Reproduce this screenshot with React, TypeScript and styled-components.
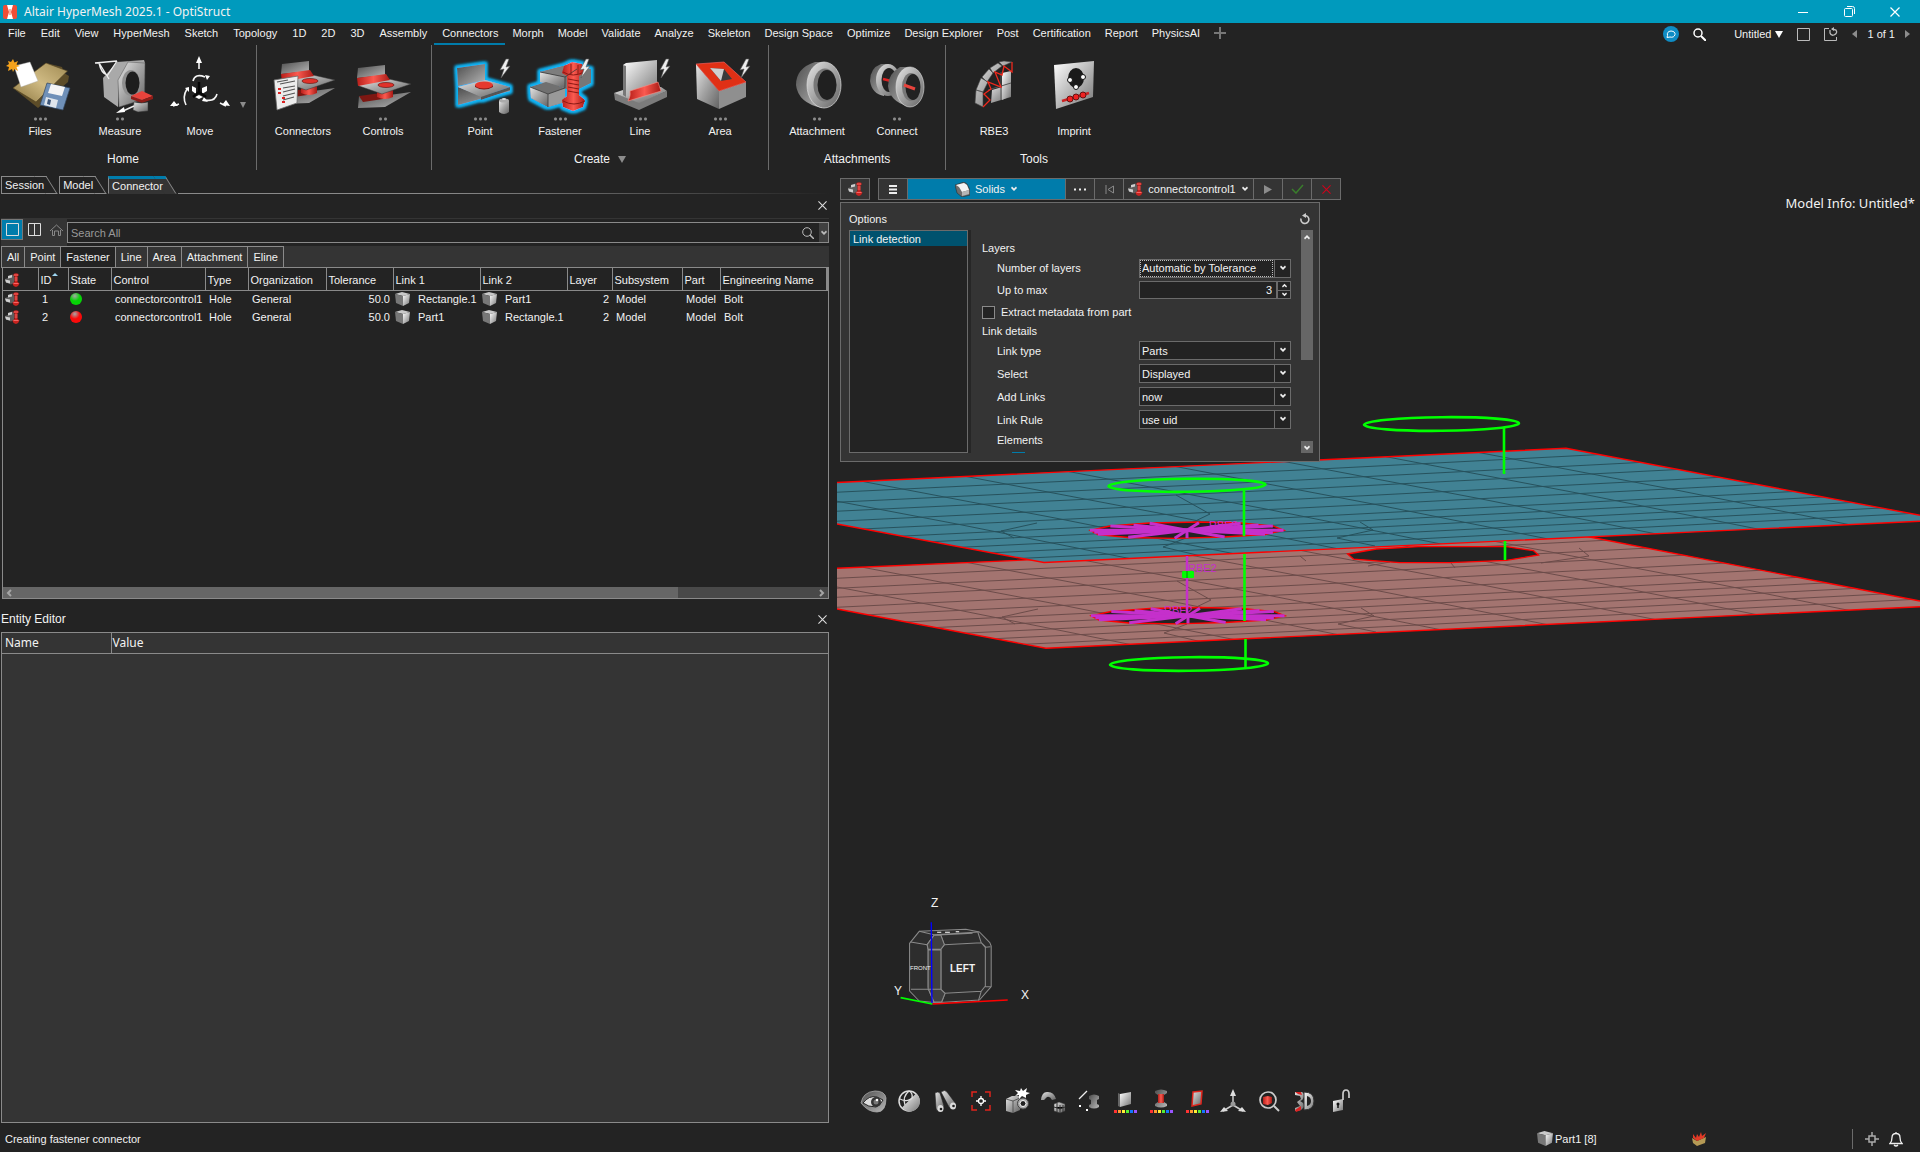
import React from "react";
import styled, { createGlobalStyle } from "styled-components";

const c = {
  bg: "#232323",
  panel: "#343434",
  line: "#8a8a8a",
  edge: "#6b6b6b",
  text: "#f2f2f2",
  accent: "#007cab",
  title: "#009abd",
};
const ui = `"Liberation Sans", Arial, sans-serif`;
const humanist = `"Noto Sans", "Open Sans", sans-serif`;

const Global = createGlobalStyle`
  *, *::before, *::after { box-sizing: border-box; }
  body { margin: 0; background: ${c.bg}; color: ${c.text}; font: 11px/14px ${ui}; }
  button, input, select { font: inherit; color: inherit; margin: 0; padding: 0; border: 0; background: none; border-radius: 0; }
  svg { display: block; flex: none; }
`;

const Page = styled.div`
  min-height: 100vh;
  display: flex;
  flex-direction: column;
`;
const Defs = styled.svg`
  position: absolute;
  width: 0;
  height: 0;
`;

/* ---------- title bar ---------- */
const TitleBar = styled.header`
  height: 23px;
  display: flex;
  align-items: center;
  gap: 7px;
  padding-left: 3px;
  background: ${c.title};
`;
const TitleText = styled.h1`
  flex: 1;
  margin: 0;
  font: 12px/20px ${humanist};
`;
const WindowButtons = styled.div`
  display: flex;
  padding-right: 2px;
`;
const WindowButton = styled.button`
  width: 46px;
  height: 22px;
  display: grid;
  place-items: center;
`;

/* ---------- menu bar ---------- */
const MenuBar = styled.nav`
  height: 22px;
  display: flex;
  align-items: stretch;
`;
const MenuItem = styled.button<{ $on?: boolean }>`
  padding: 0 7px;
  line-height: 20px;
  white-space: nowrap;
  border-bottom: 2px solid ${(p) => (p.$on ? c.accent : "transparent")};
  &:nth-child(-n + 11) { padding-left: 8px; }
`;
const MenuRight = styled.div`
  margin-left: auto;
  display: flex;
  align-items: center;
  gap: 14px;
  padding-right: 10px;
`;
const IconButton = styled.button`
  display: flex;
  align-items: center;
  gap: 4px;
`;
const Pager = styled.div`
  display: flex;
  align-items: center;
  gap: 10px;
`;

/* ---------- ribbon ---------- */
const Ribbon = styled.section`
  height: 125px;
  display: flex;
`;
const Group = styled.div<{ $pad: string }>`
  display: flex;
  flex-direction: column;
  padding: ${(p) => p.$pad};
  border-right: 1px solid ${c.edge};
  &:last-child { border-right: 0; }
`;
const Tools = styled.div`
  display: flex;
  height: 103px;
`;
const Tool = styled.button`
  width: 80px;
  display: flex;
  flex-direction: column;
  align-items: center;
  padding-top: 9px;
`;
const Dots = styled.span<{ $n: number }>`
  width: ${(p) => p.$n * 5}px;
  height: 10px;
  background: radial-gradient(circle at 50% 50%, #8c8c8c 1px, transparent 2px) 0 0 / 5px 10px;
`;
const GroupLabel = styled.div`
  height: 22px;
  display: flex;
  align-items: center;
  justify-content: center;
  gap: 8px;
  font-size: 12px;
`;
const Caret = styled.span<{ $c?: string; $s?: number }>`
  width: 0;
  height: 0;
  border: ${(p) => p.$s ?? 4}px solid transparent;
  border-top: ${(p) => (p.$s ?? 4) + 3}px solid ${(p) => p.$c ?? "#8c8c8c"};
  border-bottom: 0;
`;
const MoreCaret = styled.button`
  align-self: flex-end;
  width: 6px;
  padding-bottom: 27px;
`;

/* ---------- body ---------- */
const Body = styled.main`
  flex: 1;
  display: grid;
  grid-template-columns: minmax(0, 830fr) minmax(0, 1083fr);
  gap: 7px;
`;
const Left = styled.div`
  display: flex;
  flex-direction: column;
  padding: 6px 1px 3px 1px;
`;
const Tabs = styled.div`
  display: flex;
  height: 18px;
`;
const Tab = styled.button<{ $on?: boolean }>`
  position: relative;
  padding: 0 2px 0 3px;
  margin-right: 13px;
  border-left: 1px solid ${c.line};
  border-top: ${(p) => (p.$on ? `3px solid ${c.accent}` : `1px solid ${c.line}`)};
  border-bottom: 1px solid ${(p) => (p.$on ? c.panel : c.line)};
  background: ${(p) => (p.$on ? c.panel : c.bg)};
  line-height: ${(p) => (p.$on ? 13 : 16)}px;
  &::after {
    content: "";
    position: absolute;
    top: ${(p) => (p.$on ? -3 : -1)}px;
    bottom: -1px;
    right: -6px;
    width: 12px;
    transform: skewX(32deg);
    border-right: 1px solid ${c.line};
    border-top: ${(p) => (p.$on ? `3px solid ${c.accent}` : `1px solid ${c.line}`)};
    border-bottom: 1px solid ${(p) => (p.$on ? c.panel : c.line)};
    background: ${(p) => (p.$on ? c.panel : c.bg)};
    z-index: 0;
  }
  span { position: relative; z-index: 1; }
`;
const TabRule = styled.div`
  flex: 1;
  border-bottom: 1px solid;
  border-image: linear-gradient(90deg, ${c.line}, ${c.line} 40%, ${c.bg}) 1;
`;
const PanelHead = styled.div<{ $h: number; $pad?: string }>`
  height: ${(p) => p.$h}px;
  display: flex;
  align-items: center;
  justify-content: space-between;
  padding: ${(p) => p.$pad ?? "0 2px"};
`;
const PanelTitle = styled.h2`
  margin: 0;
  font: 12px/16px ${ui};
`;
const SearchRow = styled.div`
  height: 28px;
  display: flex;
  align-items: center;
  border-top: 1px solid ${c.panel};
  background: ${c.panel};
`;
const ViewButton = styled.button<{ $on?: boolean }>`
  width: 22px;
  height: 21px;
  display: grid;
  place-items: center;
  margin-bottom: 6px;
  border: 1px solid ${(p) => (p.$on ? "#777" : "transparent")};
  background: ${(p) => (p.$on ? c.accent : "none")};
`;
const SearchBox = styled.label`
  flex: 1;
  height: 100%;
  padding-top: 3px;
  background: ${c.bg};
  > div { display: flex; align-items: center; height: 21px; border: 1px solid ${c.line}; }
  input { flex: 1; min-width: 0; padding-left: 3px; outline: 0; }
  input::placeholder { color: #999; opacity: 1; }
`;
const SearchMore = styled.button`
  height: 19px;
  width: 9px;
  margin-left: 5px;
  display: grid;
  place-items: center;
  background: #404040;
`;
const Filters = styled.div`
  height: 22px;
  display: flex;
  background: ${c.panel};
  border-bottom: 1px solid ${c.line};
`;
const Filter = styled.button<{ $on?: boolean }>`
  padding: 0 5px;
  border: 1px solid ${c.line};
  border-bottom: 0;
  margin-right: -1px;
  background: ${(p) => (p.$on ? c.bg : c.panel)};
  line-height: 20px;
`;
const TableFrame = styled.div`
  height: 331px;
  margin: 0 0 0 1px;
  display: flex;
  flex-direction: column;
  border: 1px solid ${c.line};
  border-top: 0;
  overflow: hidden;
`;
const Table = styled.table`
  table-layout: fixed;
  width: 100%;
  border-collapse: collapse;
  th { height: 22px; padding: 2px 0 0 2px; text-align: left; font-weight: 400; white-space: nowrap; border-right: 1px solid ${c.line}; border-bottom: 1px solid ${c.line}; }
  td { height: 18px; padding: 0 3px 0 4px; white-space: nowrap; }
`;
const Num = styled.td`
  text-align: right;
`;
const SortMark = styled.span`
  display: inline-block;
  vertical-align: top;
  border: 3px solid transparent;
  border-bottom-color: #9fd6f0;
  border-top: 0;
`;
const LinkCell = styled.span`
  display: flex;
  align-items: center;
  gap: 8px;
  margin-left: -2px;
`;
const Dot = styled.span<{ $c: string }>`
  display: block;
  width: 12px;
  height: 12px;
  border-radius: 50%;
  background: radial-gradient(circle at 40% 25%, #fff9 0, ${(p) => p.$c} 5px);
`;
const HScroll = styled.div`
  margin-top: auto;
  height: 11px;
  display: flex;
  align-items: center;
  justify-content: space-between;
  padding: 0 3px;
  background: linear-gradient(90deg, #666 0 675px, #494949 675px);
`;
const Editor = styled.div`
  flex: 1;
  border: 1px solid ${c.line};
  background: ${c.panel};
`;
const EditorTable = styled.table`
  width: 100%;
  table-layout: fixed;
  border-collapse: collapse;
  font: 12px/16px ${humanist};
  th { height: 20px; padding: 0 0 0 3px; text-align: left; font-weight: 400; border-right: 1px solid ${c.line}; border-bottom: 1px solid ${c.line}; }
  th:last-child { border-right: 0; padding-left: 1px; }
`;

/* ---------- viewport ---------- */
const Viewport = styled.div`
  position: relative;
  display: flex;
  flex-direction: column;
  align-items: flex-start;
  padding: 8px 0 11px 3px;
`;
const Scene = styled.svg`
  position: absolute;
  left: 0;
  top: 0;
  width: 100%;
  height: 100%;
`;
const ModelInfo = styled.div`
  position: absolute;
  right: 5px;
  top: 24px;
  font: 13px/18px ${humanist};
`;
const Guide = styled.div`
  position: relative;
  display: flex;
  margin-bottom: 2px;
`;
const GuideButton = styled.button<{ $w?: number; $gap?: boolean }>`
  width: ${(p) => p.$w ?? 30}px;
  height: 22px;
  margin-right: ${(p) => (p.$gap ? 8 : -1)}px;
  display: flex;
  align-items: center;
  justify-content: center;
  gap: 5px;
  border: 1px solid ${c.edge};
  background: ${c.panel};
`;
const SolidsButton = styled(GuideButton)`
  background: ${c.accent};
`;
const Panel = styled.div`
  position: relative;
  width: 480px;
  height: 260px;
  padding: 7px 6px 8px 8px;
  display: flex;
  flex-direction: column;
  border: 1px solid ${c.edge};
  background: ${c.panel};
`;
const PanelTop = styled.div`
  height: 20px;
  display: flex;
  justify-content: space-between;
  align-items: center;
  padding: 0 2px 2px 0;
`;
const PanelBody = styled.div`
  flex: 1;
  min-height: 0;
  display: flex;
`;
const OptionList = styled.div`
  width: 122px;
  padding-right: 3px;
  background: #262626;
  > div { height: 100%; border: 1px solid ${c.edge}; background: ${c.bg}; }
`;
const Option = styled.button`
  display: block;
  width: 100%;
  height: 15px;
  padding-left: 3px;
  text-align: left;
  background: #00526e;
`;
const Form = styled.div`
  flex: 1;
  overflow: hidden;
  padding: 9px 10px 0 11px;
`;
const Heading = styled.div<{ $h?: number; $in?: boolean }>`
  height: ${(p) => p.$h ?? 18}px;
  display: flex;
  align-items: center;
  padding-left: ${(p) => (p.$in ? 15 : 0)}px;
`;
const Field = styled.div<{ $h?: number }>`
  height: ${(p) => p.$h ?? 23}px;
  display: flex;
  align-items: center;
  padding-left: 15px;
  > label { flex: 1; }
`;
const SelectBox = styled.span<{ $focus?: boolean }>`
  position: relative;
  width: 152px;
  height: 19px;
  display: flex;
  select {
    appearance: none;
    width: 100%;
    height: 19px;
    padding: 0 18px 0 2px;
    border: 1px solid ${c.edge};
    background: linear-gradient(90deg, transparent 134px, ${c.edge} 134px 135px, transparent 135px), ${c.bg};
    outline: 0;
  }
  &::before {
    content: "";
    position: absolute;
    inset: 1px 18px 1px 1px;
    border: 1px dotted ${(p) => (p.$focus ? "#bbb" : "transparent")};
    pointer-events: none;
  }
  svg { position: absolute; right: 4px; top: 6px; pointer-events: none; }
`;
const Spin = styled.span`
  width: 152px;
  height: 18px;
  display: flex;
  input { flex: 1; min-width: 0; text-align: right; padding-right: 4px; border: 1px solid ${c.edge}; background: ${c.bg}; outline: 0; }
`;
const Steppers = styled.span`
  width: 14px;
  display: flex;
  flex-direction: column;
  button { flex: 1; display: grid; place-items: center; border: 1px solid ${c.edge}; background: ${c.bg}; min-height: 0; }
  button + button { border-top: 0; }
`;
const Check = styled.input`
  appearance: none;
  width: 13px;
  height: 13px;
  margin: 0 6px 0 0;
  border: 1px solid ${c.line};
  background: ${c.bg};
  &:checked { background: ${c.accent}; border-color: ${c.accent}; }
`;
const CheckRow = styled.div<{ $in?: boolean }>`
  height: 22px;
  display: flex;
  align-items: ${(p) => (p.$in ? "flex-start" : "center")};
  padding: ${(p) => (p.$in ? "3px 0 0 30px" : "0")};
`;
const VScroll = styled.div`
  width: 12px;
  display: flex;
  flex-direction: column;
  justify-content: space-between;
  span { display: flex; justify-content: center; background: #666; }
  span:first-child { height: 130px; padding-top: 4px; }
  span:last-child { height: 12px; padding-top: 4px; }
`;
const ViewTools = styled.div`
  position: relative;
  margin-top: auto;
  display: flex;
  gap: 8px;
  padding-left: 19px;
`;
const ViewTool = styled.button`
  width: 28px;
  height: 28px;
`;

/* ---------- status bar ---------- */
const Status = styled.footer`
  height: 26px;
  display: flex;
  align-items: center;
  padding: 0 17px 0 5px;
`;
const StatusLeft = styled.span`
  flex: 1;
`;
const StatusItem = styled.button<{ $w: number }>`
  width: ${(p) => p.$w}px;
  display: flex;
  align-items: center;
  gap: 2px;
`;
const StatusEnd = styled.div`
  display: flex;
  align-items: center;
  gap: 10px;
  height: 20px;
  padding-left: 12px;
  border-left: 1px solid ${c.edge};
`;

/* ---------- drawings ---------- */
const M = "url(#metal)";
const MD = "url(#metalDark)";
const ML = "url(#metalLight)";
const R = "url(#red)";
const Svg = ({ s = 60, children }: { s?: number; children: React.ReactNode }) => (
  <svg width={s} height={s} viewBox={`0 0 ${s} ${s}`} overflow="visible" aria-hidden="true">{children}</svg>
);
const Lightning = () => <path d="M56 5 50 16l4-1-3 9 9-12-4 1 3-8z" fill="#eee" stroke="#555" strokeWidth=".6" />;
const Chevron = ({ up, w = 8, fill = "#eee" }: { up?: boolean; w?: number; fill?: string }) => (
  <svg width={w} height={w === 8 ? 6 : 5} viewBox="0 0 8 6" aria-hidden="true">
    <path d={up ? "M1 4 4 1l3 3-1 1.500-2-2-2 2z" : "M1 2l1-1.500 2 2 2-2L7 2 4 5z"} fill={fill} />
  </svg>
);
const Tri = ({ left }: { left?: boolean }) => (
  <svg width="5" height="8" viewBox="0 0 5 8" aria-hidden="true"><path d={left ? "M5 0v8L0 4z" : "M0 0v8l5-4z"} fill="#8c8c8c" /></svg>
);
const ScrollMark = ({ right }: { right?: boolean }) => (
  <svg width="6" height="8" viewBox="0 0 6 8" aria-hidden="true"><path d={right ? "M1 1l3 3-3 3" : "M5 1 2 4l3 3"} fill="none" stroke="#a5a5a5" strokeWidth="2" /></svg>
);
const Cross = ({ s = 9, color = "#ddd" }: { s?: number; color?: string }) => (
  <svg width={s} height={s} viewBox="0 0 10 10" aria-hidden="true"><path d="M.5.5l9 9M9.5.5l-9 9" stroke={color} strokeWidth="1.200" /></svg>
);
const PartCube = ({ s = 15 }: { s?: number }) => (
  <svg width={s} height={s} viewBox="0 0 15 15" aria-hidden="true">
    <path d="M0 2 7 0l8 2-7 2z" fill="#c9c9c9" /><path d="M0 2l8 2v10l-7-3z" fill="#777" /><path d="M8 4l7-2-1 9-6 3z" fill={ML} />
  </svg>
);
const SolidCube = () => (
  <svg width="15" height="15" viewBox="0 0 15 15" aria-hidden="true">
    <path d="M0 3 9 0l3 2 3 6v5l-8 2-5-4z" fill="#6d6d6d" stroke="#222" strokeWidth=".5" /><path d="M1 3 9 1l3 2 2 5-7 2-3-5z" fill="#f4f4f4" /><path d="M7 10l7-2v4l-7 2z" fill="#b5b5b5" />
  </svg>
);
const FastenerMini = () => (
  <svg width="15" height="14" viewBox="0 0 15 14" aria-hidden="true">
    <path d="M0 6l3-1V3l4-1.500 2 .5v8l-3 1.500-5-2z" fill="#5e5e5e" /><path d="M3 3l4-1v2.500L3 5.500zM0 6.500l5 1v3l-4-1z" fill="#cfcfcf" />
    <path d="M8.500 1q2.500-1.600 5 0v2h-1v6l2 1.500q-1 3-3.500 3.500-3-.5-3.500-3.500L9.500 9V3h-1z" fill="#c8231f" /><path d="M9 2h4M9.500 5h3M9.500 7h3M8.500 10.500h5" stroke="#f77" strokeWidth=".8" />
  </svg>
);
const Reload = () => (
  <svg width="12" height="12" viewBox="0 0 12 12" aria-hidden="true"><path d="M2 5.500a4 4 0 1 0 4.500-3" fill="none" stroke="#ccc" strokeWidth="1.600" /><path d="M3 2.500 7 0v5z" fill="#ccc" /></svg>
);

const Flanges = () => (
  <>
    <path d="M9 50l1-12 16 1 36-5-26 15z" fill={MD} />
    <path d="M10 38l22-3 2 6-20 3z" fill="#7d1712" />
    <path d="M28 32h16v7q-8 4-16 0z" fill={R} />
    <path d="M9 25l31-4 22 5-29 10-23-8z" fill={M} stroke="#333" strokeWidth=".5" />
    <path d="M9 10l27-3v10L8 20z" fill={MD} />
    <path d="M8 20l29-4 4 6-32 6z" fill={R} />
    <ellipse cx="37" cy="27" rx="8" ry="2.500" fill="#e0322b" stroke="#5a0c08" strokeWidth=".6" />
  </>
);

const ribbonIcons: Record<string, React.ReactNode> = {
  Files: (
    <Svg>
      <path d="M3 34 36 9l16 4 2 6 5 3-1 6-30 26z" fill="#5c4c28" />
      <path d="M36 9l21.500 8L26 48 3 34z" fill="url(#gold)" stroke="#4d4020" strokeWidth=".6" />
      <path d="M4 12l16-4 8 19-17 6z" fill="#fff" stroke="#aaa" strokeWidth=".4" />
      <path d="M37 29l23 5-7 22-23-5z" fill="#6f90b8" stroke="#32465f" strokeWidth=".7" />
      <path d="M41 30l14 3-3 9-14-3z" fill="#f4f4f4" /><path d="M36 43l12 3-2 8-12-3z" fill="#dfe5ec" /><path d="M38 45l3 1-1 5-3-1z" fill="#3d577b" />
      <path d="M3 5l1.500 3.500L8 7 6.500 10.500 10 12l-3.500 1L8 17l-3.500-2L3 18l-1-3-4 2 1-4-3-1 3-2-1-3 3 1z" fill="#f5a21b" />
    </Svg>
  ),
  Measure: (
    <Svg>
      <path d="M13 24 27 8l27-2 1 3-16 1-10 17-1 26-14-10z" fill="#a9a9a9" />
      <path d="M28 26 38 8l17 1-.5 36L29 53z" fill={M} stroke="#555" strokeWidth=".5" />
      <ellipse cx="41" cy="29" rx="9" ry="13" fill="#8f8f8f" /><ellipse cx="42.500" cy="29" rx="7" ry="11.500" fill="#1d1d1d" />
      <path d="M27 7 5 9h4l10 16M27 7 17 22M9 9q2 10 8 12" fill="none" stroke="#eee" strokeWidth="1.300" />
      <path d="M41 42l11-5 11 5-11 4z" fill="#e8433c" /><path d="M41 42l11 4 11-4v3l-11 4-11-4z" fill="#8e1d18" />
      <path d="M44 48q8 2 14 0v9l-10 1-5-2z" fill={M} stroke="#333" strokeWidth=".5" />
      <path d="M44 52l-11 5" stroke="#eee" strokeWidth="1.500" /><path d="M26 59l8-6 1 5z" fill="#fff" />
    </Svg>
  ),
  Move: (
    <Svg>
      <g fill="none" stroke="#f4f4f4" strokeWidth="1.600">
        <path d="M29 15V7M9 50l-6 2M50 49l6 3M23 27q2-8 12-4M17 35q-5 8-1 16M47 40q-2 8-12 6" />
      </g>
      <path d="M29 2l3 7h-6zM0 52l4-5 4 5zM60 52l-8-1 4-5zM37 26l-2-5 5 1zM19 33l-4 1 4 4zM34 43l-2 4 6 1z" fill="#fff" />
      <path d="M22 32l4 2v6l-4-3zM32 34l5-2v5l-5 3zM25 43l4-2 4 2-4 2z" fill="#fff" /><path d="M29 28v10l-6 5M29 38l7 5" stroke="#050505" strokeWidth="2.500" fill="none" />
    </Svg>
  ),
  Connectors: (
    <Svg>
      <Flanges />
      <path d="M1 26l24-4-1 27-20 7z" fill="#ececec" stroke="#666" strokeWidth=".8" />
      <path d="M4 28l11-2M10 34l12-2M10 38l12-3M10 42l12-3M10 46l11-3M7 30l15-3" stroke="#555" strokeWidth="1.200" /><path d="M5 35h3M5 39h3M9 44h3M9 48h3" stroke="#d22" strokeWidth="2" />
    </Svg>
  ),
  Controls: <Svg><g transform="translate(-4 4)"><Flanges /></g></Svg>,
  Point: (
    <Svg>
      <g filter="url(#glow)">
        <path d="M8 33l23 9 29-8v3L8 51z" fill={MD} /><path d="M8 33l27-7 25 7-29 10z" fill={M} /><path d="M31 43l29-10v3L31 46z" fill="#555" />
        <path d="M7 14l28-4v16L8 32z" fill={MD} />
      </g>
      <path d="M25 31v2q9 5 18 0v-2z" fill="#7d1712" /><ellipse cx="34" cy="31" rx="9" ry="3.500" fill="#e5392f" />
      <Lightning />
      <path d="M49 47v11q5 4 10 0V47z" fill={M} /><ellipse cx="54" cy="46.500" rx="5" ry="2" fill="#aaa" /><ellipse cx="54" cy="45" rx="2" ry="1" fill="#ddd" />
    </Svg>
  ),
  Fastener: (
    <Svg>
      <g filter="url(#glow)">
        <path d="M10 18 37 11l24 4v14l-12 6-14 0z" fill="#777" /><path d="M10 18l25 5v11l-25-6z" fill={M} /><path d="M10 18l27-7 10 4-12 8z" fill="#7d7d7d" />
        <path d="M0 33l16-5 19 6v14l-17 5L1 44z" fill="#6f6f6f" /><path d="M0 33l18 7v13L1 44z" fill={M} /><path d="M18 40l17-6v14l-17 5z" fill="#999" />
        <path d="M34 12l8-4 10 2 2 9-5 3v19l6 5-2 7-10 4-10-4-1-7 5-4V22l-5-3z" fill={R} />
      </g>
      <path d="M10 18l25 5v11M35 23l12-8M0 33l18 7v13M18 40l17-6" stroke="#3a3a3a" strokeWidth=".8" fill="none" />
      <path d="M33 18q10 6 21 0M38 25l11 2M38 29l11 2M38 33l11 2M38 37l11 2M33 47q11 6 22 0M41 10v10M48 11v9" stroke="#8b1a15" fill="none" />
      <Lightning />
    </Svg>
  ),
  Line: (
    <Svg>
      <path d="M4 39l25 9 28-11v6L29 56 5 46z" fill="#7b7b7b" /><path d="M4 39l25 10 28-12-6-4-38 3z" fill={M} />
      <path d="M13 11l3-2 31-3v26L16 43l-3-2z" fill={ML} /><path d="M13 11l3 1v31l-3-2z" fill="#777" />
      <path d="M20 37l28-9 3 9-33 10q3-5 2-10z" fill={R} stroke="#ff8d84" strokeWidth=".6" /><Lightning />
    </Svg>
  ),
  Area: (
    <Svg>
      <path d="M6 10l23 27v18L7 45z" fill={M} /><path d="M56 28v15L29 55V37z" fill="#8f8f8f" /><path d="M6 10l28-2 22 20-27 9z" fill="#e03015" stroke="#f66" strokeWidth=".6" />
      <path d="M20 14l14 1 8 10-11 2z" fill="#3b3b3b" /><path d="M20 14l14 1-3 12z" fill="#cfcfcf" /><Lightning />
    </Svg>
  ),
  Attachment: (
    <Svg>
      <path d="M36 8H28Q9 14 9 31q2 18 26 23z" fill={MD} /><ellipse cx="37" cy="31" rx="17" ry="23" fill={M} stroke="#ddd" strokeWidth=".7" />
      <ellipse cx="38" cy="31" rx="11.500" ry="16.500" fill="#777" /><ellipse cx="40" cy="31" rx="9.500" ry="15" fill="#202020" />
    </Svg>
  ),
  Connect: (
    <Svg>
      <path d="M22 10h-8Q3 14 3 27q2 13 14 15z" fill={MD} /><ellipse cx="21" cy="26" rx="12" ry="16" fill={M} /><ellipse cx="22" cy="26" rx="7.500" ry="12" fill="#222" />
      <path d="M16 25l12 3" stroke="#d22" strokeWidth="2.500" />
      <path d="M42 13H33Q21 20 21 32q2 16 20 20z" fill={MD} /><ellipse cx="43" cy="33" rx="14" ry="20" fill={M} stroke="#ddd" strokeWidth=".6" /><ellipse cx="44" cy="33" rx="9" ry="14" fill="#777" /><ellipse cx="46" cy="33" rx="7.500" ry="13" fill="#222" />
      <path d="M37 31l11 4" stroke="#e8433c" strokeWidth="3" />
    </Svg>
  ),
  RBE3: (
    <Svg>
      <path d="M11 49l1-13 6-12 8-9 12-8 10 1v10q-14 5-22 20l-6 15z" fill="#222" />
      <path d="M28 36l10-3 9-4v14l-20 6z" fill={M} /><path d="M38 19l9-2v25l-9 4z" fill={ML} /><path d="M37 18v28M24 36l23-7" stroke="#555" />
      <path d="M11 49l1-13 7 2v15zM12 36l5-12 7 4-5 10zM18 23l7-8 4 4-6 9zM26 14l8-5 4 3-9 7zM35 8l5-1 8 1-9 4z" fill={M} stroke="#444" strokeWidth=".6" />
      <path d="M48 8v10l-8-6-2 9-7-3 6 15-13-5 3 7-7 5 6 6-7 7" fill="none" stroke="#f0281c" strokeWidth="1.300" />
    </Svg>
  ),
  Imprint: (
    <Svg>
      <path d="M10 11l40-4-1 36-37 12z" fill={ML} />
      <ellipse cx="32" cy="24" rx="8" ry="10" fill="#1a1a1a" /><g fill="#fff" stroke="#111"><circle cx="26" cy="26" r="2.500" /><circle cx="39" cy="23" r="2.500" /><circle cx="32" cy="33" r="2.500" /></g>
      <path d="M18 47l27-8" stroke="#c22" strokeWidth="2.500" /><g fill="#e22" stroke="#611"><circle cx="26" cy="45" r="3" /><circle cx="32" cy="43" r="3" /><circle cx="39" cy="41" r="3" /></g>
    </Svg>
  ),
};

const Rainbow = () => (
  <>{["#f33", "#f93", "#fe3", "#5e3", "#17f", "#95f"].map((f, i) => <rect key={f} x={3 + i * 4} y="23" width="3" height="3" fill={f} />)}</>
);
const viewIcons: [string, React.ReactNode][] = [
  ["Visibility", <><path d="M2 16Q4 5 16 4q10 0 11 7 0 14-9 14Q9 25 2 16z" fill={MD} stroke="#aaa" strokeWidth=".8" /><path d="M4 16q6-8 14-6l6 3q-3 6-7 7-8 0-13-4z" fill="#ddd" stroke="#222" /><circle cx="17" cy="15" r="5" fill="#333" /><circle cx="17" cy="15" r="2.500" fill="#777" /><circle cx="18" cy="13" r="1.300" fill="#fff" /></>],
  ["Globe", <><circle cx="14" cy="14" r="10" fill="#232323" stroke="#ddd" strokeWidth="1.500" /><path d="M21 6.500a10 10 0 1 1-14 14z" fill={ML} /><path d="M5 12q8 4 13-2M14 4q-7 6-4 14M14 4q4 2 3 7" fill="none" stroke="#ddd" strokeWidth="1.300" /></>],
  ["Find", <><path d="M4 6q3-2 5 0l4 13q-1 6-5 5-3 0-3-3z" fill={M} stroke="#222" strokeWidth=".6" /><path d="M10 5q4-3 6 0l9 12q1 4-3 5-3 0-4-2z" fill={M} stroke="#222" strokeWidth=".6" /><ellipse cx="9.500" cy="21.500" rx="3" ry="3.500" fill="#ddd" /><ellipse cx="22" cy="19" rx="3" ry="3.500" fill="#ddd" /><circle cx="10" cy="22" r="1.300" fill="#222" /><circle cx="22.500" cy="19" r="1.300" fill="#222" /></>],
  ["Fit", <><path d="M5 10V5h5M18 5h5v5M23 18v5h-5M10 23H5v-5" fill="none" stroke="#e0241c" strokeWidth="1.500" /><circle cx="14" cy="14" r="2.500" fill="none" stroke="#fff" strokeWidth="1.300" /><path d="M14 9v3M14 16v3M9 14h3M16 14h3" stroke="#fff" strokeWidth="1.300" /></>],
  ["Capture", <><path d="M3 12l6-3h8v14l-7 3-7-2z" fill={M} /><path d="M3 12l7 2v12M10 14l7-3" stroke="#444" fill="none" strokeWidth=".8" /><circle cx="20" cy="16.500" r="5.500" fill="#aaa" stroke="#444" /><circle cx="20" cy="16.500" r="3" fill="#222" stroke="#fff" /><path d="M18 1l2 3 4-3-1 4 4 1-4 2v3l-4-2-3 3v-4l-4 1 3-3-3-3 5 1z" fill="#fff" /></>],
  ["Shading", <><path d="M2 13Q3 4 9 5q6 0 8 7l-4 1q-2-4-5-3l-3 3z" fill={M} /><path d="M15 17l5-2 6 2v7l-5 2-6-2z" fill={M} stroke="#333" strokeWidth=".5" /><path d="M21 18v8M15 20l6 2 5-2M18 16v9M24 18v7" stroke="#333" /></>],
  ["Elements", <><path d="M4 12l8-8" stroke="#eee" strokeWidth="1.300" /><path d="M4 18h2v2H4zM11 22h2v2h-2z" fill="#fff" /><path d="M14 9q5-3 10 0v3l-2 1v4l2 1v2q-5 3-10 0v-2l2-1v-4l-2-1z" fill={MD} /></>],
  ["Color by component", <><path d="M9 7l11-2v12L9 20z" fill={ML} /><path d="M7 6l2 1v13l-2-1z" fill="#666" /><Rainbow /></>],
  ["Color by connector", <><path d="M8 4q6-3 12 0v2l-3 2v7l3 2v2q-6 3-12 0v-2l3-2V8L8 6z" fill={MD} /><path d="M11 7h6v9h-6z" fill={R} /><Rainbow /></>],
  ["Color by edge", <><path d="M10 5l9-1-1 13-9 2z" fill={M} stroke="#e0241c" strokeWidth="1.500" /><Rainbow /></>],
  ["Axes", <><path d="M14 6v12L4 24M14 18l10 6" stroke="#ccc" strokeWidth="1.500" fill="none" /><path d="M14 2l3 7h-6zM1 25l4-5 4 4zM27 25l-4-5-4 4z" fill="#ddd" /><circle cx="14" cy="17" r="2.500" fill="#999" /></>],
  ["Zoom entity", <><circle cx="13" cy="13" r="8" fill="#222" stroke="#ccc" strokeWidth="1.700" /><path d="M19 19l5 5" stroke="#ccc" strokeWidth="2" /><path d="M8 10l5-1 4 1v6l-4 2-5-1z" fill={R} /></>],
  ["Perspective", <><path d="M4 5h7q3 2 2 5-1 3-4 4 5 2 4 6-2 3-6 4H4v-3l5-2-3-4 4-3-1-3-5-1z" fill={M} /><path d="M4 5h6l1 3-4-1zM4 23l6-4v4l-5 2z" fill="#d22" /><path d="M13 5q10 0 10 9t-10 9z" fill={ML} stroke="#333" /><path d="M16 9q4 1 4 5t-4 5z" fill="#222" /></>],
  ["Unlock", <><path d="M6 14l10-2v11L6 25z" fill={ML} /><path d="M16 13V7q0-4 3-4t3 4v4" fill="none" stroke="#ccc" strokeWidth="1.700" /><circle cx="11" cy="17" r="1.500" fill="#111" /><path d="M11 17v4" stroke="#111" strokeWidth="1.500" /></>],
];

const backLines = [758, 862, 966, 1069, 1176, 1284, 1386, 1478];
const longLines = [470, 480, 489, 499, 508, 517, 524, 531, 538, 545];
const bluePoly = "837,482.500 1566,448.300 1920,515.300 1920,521.300 1044,562.500 837,524";
const pinkPoly = "837,568.300 1582,535.500 1920,601 1920,606.700 1046,648.300 837,609";
const spokes = [[728, 391], [785, 378], [850, 376], [895, 370], [1033, 368], [1150, 370], [1200, 375], [1240, 378], [1270, 391], [1240, 398], [1218, 403], [1105, 411], [965, 415], [835, 412], [750, 403], [740, 397]];

const MeshLines = ({ stroke }: { stroke: string }) => (
  <g fill="none" stroke={stroke} strokeWidth="1">
    {backLines.map((x) => {
      const y = 482.5 - (x - 837) * 0.047;
      return <path key={x} d={`M${x} ${y}l${200} ${38}l${300} ${60}`} />;
    })}
    {longLines.map((y) => <path key={y} d={`M800 ${y + 24}L1300 ${y}L1920 ${y - 32}`} />)}
    <path d="M1176 495l34 19-23 11M1037 523l-36 8 13 7M1186 538l-23 9 38 9M1360 522l13 8-36 8 38 8" />
  </g>
);
const Spider = () => (
  <g>
    <polygon points="1090,530.300 1110,526 1149,523 1200,522 1241,523 1273,526 1284,530.300 1265,534.500 1224,537 1175,538.300 1128,537.500 1098,534.500" fill="#232323" stroke="#f00" strokeWidth="1.300" />
    <g stroke="#c530cb" strokeWidth="3">
      {spokes.map(([x, y]) => <path key={`${x}-${y}`} d={`M1187 530.300L${830 + x / 2.8} ${400 + y / 3}`} />)}
      <path d="M1187 530v8" />
    </g>
  </g>
);

const ModelScene = () => (
  <Scene viewBox="837 170 1083 956" preserveAspectRatio="xMinYMin meet" role="img" aria-label="Model view">
    <clipPath id="blueClip"><polygon points={bluePoly} /></clipPath>
    <clipPath id="pinkClip"><polygon points={pinkPoly} /></clipPath>
    <polygon points={pinkPoly} fill="#a37470" />
    <g clipPath="url(#pinkClip)">
      <g transform="translate(1 86)"><MeshLines stroke="#6c4c4a" /></g>
      <path d="M1579 548l10 8-48 7M1300 556l6 5M1368 566l22-4M1451 563l4 5" fill="none" stroke="#6c4c4a" />
    </g>
    <path d="M1347.500 554l29-5 42-2.300h88l27 4 5 4.300-32 5.300-56 2.400h-51l-46-3.600z" fill="#232323" stroke="#f00" strokeWidth="1.300" />
    <path d="M837 568.300 1582 535.500 1920 601M1920 606.700 1046 648.300 837 609" fill="none" stroke="#f00" strokeWidth="1.400" />
    <polygon points={bluePoly} fill="#418294" />
    <g clipPath="url(#blueClip)"><MeshLines stroke="#27525d" /></g>
    <path d="M837 482.500 1566 448.300 1920 515.300M1920 521.300 1044 562.500 837 524" fill="none" stroke="#f00" strokeWidth="1.400" />
    <g fill="#c530cb" fontFamily="Liberation Sans, sans-serif" fontSize="11">
      <text x="1188" y="572">RBE2</text>
      <Spider />
      <g transform="translate(1 85.500)"><Spider /></g>
      <text x="1209" y="529">RBE2</text>
      <text x="1164" y="614">RBE2</text>
    </g>
    <path d="M1187 556v58" stroke="#c530cb" strokeWidth="2.500" />
    <rect x="1182" y="571" width="12" height="7" rx="1" fill="#0f0" /><path d="M1187 571v7" stroke="#0a8a0a" />
    <g fill="none" stroke="#0f0" strokeWidth="2.600">
      <ellipse cx="1187" cy="485.300" rx="78.500" ry="6.500" transform="rotate(-.6 1187 485)" />
      <ellipse cx="1189" cy="664" rx="79" ry="6.800" transform="rotate(-.6 1189 664)" />
      <ellipse cx="1441.500" cy="424" rx="77.500" ry="6.800" transform="rotate(-.6 1441 424)" />
      <path d="M1244 489v47M1244.500 554v67M1245.500 639v28M1504 428v46M1505 541v19" />
    </g>
    <g transform="translate(840 880) scale(.3444 .3333)" fill="#2d2d2d" stroke="#8a8a8a" strokeWidth="3" strokeLinejoin="round">
      <path d="M230 154l135-6 40 8 30 32 4 10v122l-34 40-125 8-50-5-28-30V190z" />
      <path d="M205 186l48 8 20-28 112-6M253 194l3 16v112l22 0M293 208h-37l-3-14 20-28 20 0 10 28zM293 208l0 120h-37l-50 0M302 194l108-6 12 12 0 118-12 16-106 6-11-12M273 368l-16-40 36 0 12 12-10 26M400 156l10 32 12 14 15-2M422 320l16 0M410 334l-8 28M230 154l43 10 130-8" fill="none" />
      <path d="M273 166h20l10 28-10 14h-37l-3-14zM256 210h37v118h-37zM257 328h36l12 12-10 26h-22z" fill="#404040" />
      <path d="M282 157h12M305 157h14M336 155h10" stroke="#fff" />
      <path d="M265 127l2 245" stroke="#00f" strokeWidth="4" /><path d="M268 372l219-12" stroke="#f00" strokeWidth="5" /><path d="M176 353l92 19" stroke="#0f0" strokeWidth="5" />
    </g>
    <g fill="#f2f2f2" fontFamily="Liberation Sans, sans-serif" fontSize="12">
      <text x="931" y="907">Z</text><text x="894" y="995">Y</text><text x="1021" y="999">X</text>
      <text x="950" y="972" fontSize="10" fontWeight="700">LEFT</text>
      <text x="910" y="970" fontSize="6">FRONT</text>
    </g>
  </Scene>
);

/* ---------- data ---------- */
const menus = ["File", "Edit", "View", "HyperMesh", "Sketch", "Topology", "1D", "2D", "3D", "Assembly", "Connectors", "Morph", "Model", "Validate", "Analyze", "Skeleton", "Design Space", "Optimize", "Design Explorer", "Post", "Certification", "Report", "PhysicsAI"];
const groups: { label: string; pad: string; caret?: boolean; more?: boolean; tools: [string, number][] }[] = [
  { label: "Home", pad: "0 10px 0 0", more: true, tools: [["Files", 3], ["Measure", 2], ["Move", 0]] },
  { label: "", pad: "0 8px 0 6px", tools: [["Connectors", 0], ["Controls", 2]] },
  { label: "Create", pad: "0 8px", caret: true, tools: [["Point", 3], ["Fastener", 3], ["Line", 3], ["Area", 3]] },
  { label: "Attachments", pad: "0 8px", tools: [["Attachment", 2], ["Connect", 2]] },
  { label: "Tools", pad: "0 8px", tools: [["RBE3", 0], ["Imprint", 0]] },
];
const columns: [string, number][] = [["", 35], ["ID", 30], ["State", 43], ["Control", 94], ["Type", 43], ["Organization", 78], ["Tolerance", 67], ["Link 1", 87], ["Link 2", 87], ["Layer", 45], ["Subsystem", 70], ["Part", 38], ["Engineering Name", 106]];
const rows = [
  { id: "1", color: "#06d406", links: ["Rectangle.1", "Part1"] },
  { id: "2", color: "#fa0a0a", links: ["Part1", "Rectangle.1"] },
];

const SelectField = ({ id, label, value, h, focus }: { id: string; label: string; value: string; h?: number; focus?: boolean }) => (
  <Field $h={h}>
    <label htmlFor={id}>{label}</label>
    <SelectBox $focus={focus}>
      <select id={id} defaultValue={value}><option>{value}</option></select>
      <Chevron />
    </SelectBox>
  </Field>
);

export default function App() {
  return (
    <Page>
      <Global />
      <Defs aria-hidden="true">
        <defs>
          <linearGradient id="metal" x1="0" y1="0" x2="1" y2="1"><stop offset="0" stopColor="#e6e6e6" /><stop offset=".5" stopColor="#a2a2a2" /><stop offset="1" stopColor="#636363" /></linearGradient>
          <linearGradient id="metalDark" x1="0" y1="0" x2="1" y2="1"><stop offset="0" stopColor="#4d4d4d" /><stop offset=".6" stopColor="#8d8d8d" /><stop offset="1" stopColor="#b9b9b9" /></linearGradient>
          <linearGradient id="metalLight" x1="0" y1="0" x2="1" y2="1"><stop offset="0" stopColor="#fff" /><stop offset="1" stopColor="#757575" /></linearGradient>
          <linearGradient id="red"><stop offset="0" stopColor="#b81f1a" /><stop offset=".5" stopColor="#fb5a50" /><stop offset="1" stopColor="#a81a15" /></linearGradient>
          <linearGradient id="gold" x1="0" y1="1" x2="1" y2="0"><stop offset="0" stopColor="#8c7640" /><stop offset=".5" stopColor="#d0bb84" /><stop offset="1" stopColor="#a08a52" /></linearGradient>
          <filter id="glow" x="-20%" y="-20%" width="140%" height="140%">
            <feMorphology in="SourceAlpha" operator="dilate" radius="1.500" result="d" /><feGaussianBlur in="d" stdDeviation="1.800" result="b" />
            <feFlood floodColor="#12b4f5" /><feComposite in2="b" operator="in" result="g" /><feMerge><feMergeNode in="g" /><feMergeNode in="g" /><feMergeNode in="SourceGraphic" /></feMerge>
          </filter>
        </defs>
      </Defs>

      <TitleBar>
        <svg width="14" height="14" viewBox="0 0 14 14" aria-hidden="true"><rect width="14" height="14" rx="2" fill="#f04e37" /><path d="M4 0h6L8 7l2 7H4l2-7z" fill="#fff" /><path d="M6 4h2v6H6z" fill="#f9b1a5" /></svg>
        <TitleText>Altair HyperMesh 2025.1 - OptiStruct</TitleText>
        <WindowButtons>
          <WindowButton aria-label="Minimize"><svg width="10" height="10" viewBox="0 0 10 10"><path d="M0 5.500h10" stroke="#fff" /></svg></WindowButton>
          <WindowButton aria-label="Restore"><svg width="11" height="11" viewBox="0 0 11 11"><path d="M.5 3.500q0-1 1-1h6q1 0 1 1v6q0 1-1 1h-6q-1 0-1-1zM3 .5h5.500q2 0 2 2V8" fill="none" stroke="#fff" /></svg></WindowButton>
          <WindowButton aria-label="Close"><Cross s={10} color="#fff" /></WindowButton>
        </WindowButtons>
      </TitleBar>

      <MenuBar>
        {menus.map((m) => <MenuItem key={m} $on={m === "Connectors"}>{m}</MenuItem>)}
        <MenuItem aria-label="Add ribbon"><svg width="12" height="12" viewBox="0 0 12 12"><path d="M6 0v12M0 6h12" stroke="#777" strokeWidth="2" /></svg></MenuItem>
        <MenuRight>
          <IconButton aria-label="Chat"><svg width="16" height="16" viewBox="0 0 16 16"><circle cx="8" cy="8" r="8" fill="#0f8cc4" /><path d="M4 11.500l.5-2q-1-4 3.500-4.500 4.500.5 4 3.500-1 3.500-5 2.500z" fill="none" stroke="#fff" /></svg></IconButton>
          <IconButton aria-label="Search"><svg width="13" height="13" viewBox="0 0 13 13"><circle cx="5" cy="5" r="4" fill="none" stroke="#fff" strokeWidth="1.500" /><path d="M8 8l5 5" stroke="#fff" strokeWidth="2" /></svg></IconButton>
          <span />
          <IconButton>Untitled<Caret $c="#fff" /></IconButton>
          <IconButton aria-label="Page"><svg width="13" height="13" viewBox="0 0 13 13"><path d="M.5.5h12v12H.5z" fill="none" stroke="#bbb" /></svg></IconButton>
          <IconButton aria-label="Reset page"><svg width="14" height="14" viewBox="0 0 14 14"><path d="M5 1.500H.5v12h12V10" fill="none" stroke="#bbb" /><path d="M6 3v3q1 3 4 2 4-2 2-5l-4-1" fill="none" stroke="#bbb" strokeWidth="1.300" /><path d="M7 2l3-2v4z" fill="#bbb" /></svg></IconButton>
          <Pager><IconButton aria-label="Previous page"><Tri left /></IconButton>1 of 1<IconButton aria-label="Next page"><Tri /></IconButton></Pager>
        </MenuRight>
      </MenuBar>

      <Ribbon>
        {groups.map((g) => (
          <Group key={g.label} $pad={g.pad}>
            <Tools>
              {g.tools.map(([name, n]) => (
                <Tool key={name}>{ribbonIcons[name]}<Dots $n={n} />{name}</Tool>
              ))}
              {g.more && <MoreCaret aria-label="More tools"><Caret $s={3} /></MoreCaret>}
            </Tools>
            <GroupLabel>{g.label}{g.caret && <Caret />}</GroupLabel>
          </Group>
        ))}
      </Ribbon>

      <Body>
        <Left>
          <Tabs>
            <Tab><span>Session</span></Tab>
            <Tab><span>Model</span></Tab>
            <Tab $on><span>Connector</span></Tab>
            <TabRule />
          </Tabs>
          <PanelHead $h={24} $pad="0 2px 1px"><span /><IconButton aria-label="Close browser"><Cross /></IconButton></PanelHead>
          <SearchRow>
            <ViewButton $on aria-label="Single view"><svg width="13" height="13" viewBox="0 0 13 13"><path d="M.5.5h12v12H.5z" fill="none" stroke="#ddd" /></svg></ViewButton>
            <ViewButton aria-label="Split view"><svg width="13" height="13" viewBox="0 0 13 13"><path d="M.5.5h12v12H.5zM6.500 0v13" fill="none" stroke="#ddd" /></svg></ViewButton>
            <ViewButton aria-label="Home"><svg width="13" height="12" viewBox="0 0 13 12"><path d="M0 7l6.500-6L13 7M2.500 6v5.500h2V7h4v4.500h2V6" fill="none" stroke="#888" /></svg></ViewButton>
            <SearchBox><div><input placeholder="Search All" aria-label="Search All" /><svg width="12" height="12" viewBox="0 0 12 12"><circle cx="5" cy="5" r="4.300" fill="none" stroke="#bbb" /><path d="M8 8l4 4" stroke="#bbb" strokeWidth="1.500" /></svg><SearchMore aria-label="Search options"><Chevron fill="#bbb" /></SearchMore></div></SearchBox>
          </SearchRow>
          <Filters>
            {["All", "Point", "Fastener", "Line", "Area", "Attachment", "Eline"].map((f) => <Filter key={f} $on={f === "Fastener"}>{f}</Filter>)}
          </Filters>
          <TableFrame>
            <Table>
              <colgroup>{columns.map(([n, w]) => <col key={n} style={{ width: w }} />)}<col /></colgroup>
              <thead>
                <tr>{columns.map(([n]) => <th key={n}>{n || <FastenerMini />}{n === "ID" && <SortMark />}</th>)}<th /></tr>
              </thead>
              <tbody>
                {rows.map((r) => (
                  <tr key={r.id}>
                    <td><LinkCell><FastenerMini /></LinkCell></td><td>{r.id}</td><td><LinkCell><Dot $c={r.color} /></LinkCell></td>
                    <td>connectorcontrol1</td><td>Hole</td><td>General</td><Num>50.0</Num>
                    {r.links.map((l) => <td key={l}><LinkCell><PartCube />{l}</LinkCell></td>)}
                    <Num>2</Num><td>Model</td><td>Model</td><td>Bolt</td><td />
                  </tr>
                ))}
              </tbody>
            </Table>
            <HScroll><ScrollMark /><ScrollMark right /></HScroll>
          </TableFrame>
          <PanelHead $h={33} $pad="7px 2px 0 0"><PanelTitle>Entity Editor</PanelTitle><IconButton aria-label="Close editor"><Cross /></IconButton></PanelHead>
          <Editor>
            <EditorTable>
              <colgroup><col style={{ width: 109 }} /><col /></colgroup>
              <thead><tr><th>Name</th><th>Value</th></tr></thead>
            </EditorTable>
          </Editor>
        </Left>

        <Viewport>
          <ModelScene />
          <ModelInfo>Model Info: Untitled*</ModelInfo>
          <Guide>
            <GuideButton $gap aria-label="Fastener"><FastenerMini /></GuideButton>
            <GuideButton aria-label="Menu"><svg width="8" height="9" viewBox="0 0 8 9"><path d="M0 1h8M0 4.500h8M0 8h8" stroke="#eee" strokeWidth="2" /></svg></GuideButton>
            <SolidsButton $w={159}><SolidCube />Solids<Chevron /></SolidsButton>
            <GuideButton aria-label="More"><svg width="12" height="3" viewBox="0 0 12 3"><path d="M0 1.500h2M5 1.500h2M10 1.500h2" stroke="#eee" strokeWidth="2" /></svg></GuideButton>
            <GuideButton aria-label="Back"><svg width="9" height="9" viewBox="0 0 9 9"><path d="M1 0v9M8.500 1v7L3 4.500z" fill="none" stroke="#888" /></svg></GuideButton>
            <GuideButton $w={131}><FastenerMini />connectorcontrol1<Chevron /></GuideButton>
            <GuideButton aria-label="Run"><svg width="8" height="9" viewBox="0 0 8 9"><path d="M0 0v9l8-4.500z" fill="#8c8c8c" /></svg></GuideButton>
            <GuideButton aria-label="Accept"><svg width="13" height="10" viewBox="0 0 13 10"><path d="M1 5l4 4 7-8" fill="none" stroke="#3a7d2c" strokeWidth="1.500" /></svg></GuideButton>
            <GuideButton aria-label="Cancel"><Cross color="#d0021b" /></GuideButton>
          </Guide>
          <Panel>
            <PanelTop>Options<IconButton aria-label="Reset options"><Reload /></IconButton></PanelTop>
            <PanelBody>
              <OptionList><div><Option>Link detection</Option></div></OptionList>
              <Form>
                <Heading>Layers</Heading>
                <SelectField id="layers" label="Number of layers" value="Automatic by Tolerance" h={22} focus />
                <Field $h={22}>
                  <label htmlFor="max">Up to max</label>
                  <Spin><input id="max" defaultValue="3" /><Steppers><button aria-label="Increase"><Chevron up w={7} /></button><button aria-label="Decrease"><Chevron w={7} /></button></Steppers></Spin>
                </Field>
                <CheckRow><Check type="checkbox" id="meta" /><label htmlFor="meta">Extract metadata from part</label></CheckRow>
                <Heading $h={16}>Link details</Heading>
                <SelectField id="type" label="Link type" value="Parts" />
                <SelectField id="sel" label="Select" value="Displayed" />
                <SelectField id="add" label="Add Links" value="now" />
                <SelectField id="rule" label="Link Rule" value="use uid" />
                <Heading $in>Elements</Heading>
                <CheckRow $in><Check type="checkbox" defaultChecked aria-label="Elements" /></CheckRow>
              </Form>
              <VScroll><span><Chevron up /></span><span><Chevron /></span></VScroll>
            </PanelBody>
          </Panel>
          <ViewTools>
            {viewIcons.map(([name, art]) => <ViewTool key={name} aria-label={name}><Svg s={28}>{art}</Svg></ViewTool>)}
          </ViewTools>
        </Viewport>
      </Body>

      <Status>
        <StatusLeft>Creating fastener connector</StatusLeft>
        <StatusItem $w={155}><PartCube s={16} />Part1 [8]</StatusItem>
        <StatusItem $w={160} aria-label="Material"><svg width="15" height="14" viewBox="0 0 15 14"><path d="M0 6l5 3 9-4-1 6-8 3-4-3z" fill="#b59a55" /><path d="M1 2l3 4 1-4 2 3 2-5 1 4 4-3-2 5-7 3-4-3z" fill="#e23a26" /></svg></StatusItem>
        <StatusEnd>
          <IconButton aria-label="Target"><svg width="14" height="14" viewBox="0 0 14 14"><path d="M4 4h6v6H4zM7 0v4M7 10v4M0 7h4M10 7h4" fill="none" stroke="#aaa" strokeWidth="1.500" /></svg></IconButton>
          <IconButton aria-label="Notifications"><svg width="14" height="15" viewBox="0 0 14 15"><path d="M1 11.500q2-2 2-6 0-4 4-4t4 4q0 4 2 6zM5 13q2 2 4 0M7 0v2" fill="none" stroke="#eee" strokeWidth="1.300" /></svg></IconButton>
        </StatusEnd>
      </Status>
    </Page>
  );
}
